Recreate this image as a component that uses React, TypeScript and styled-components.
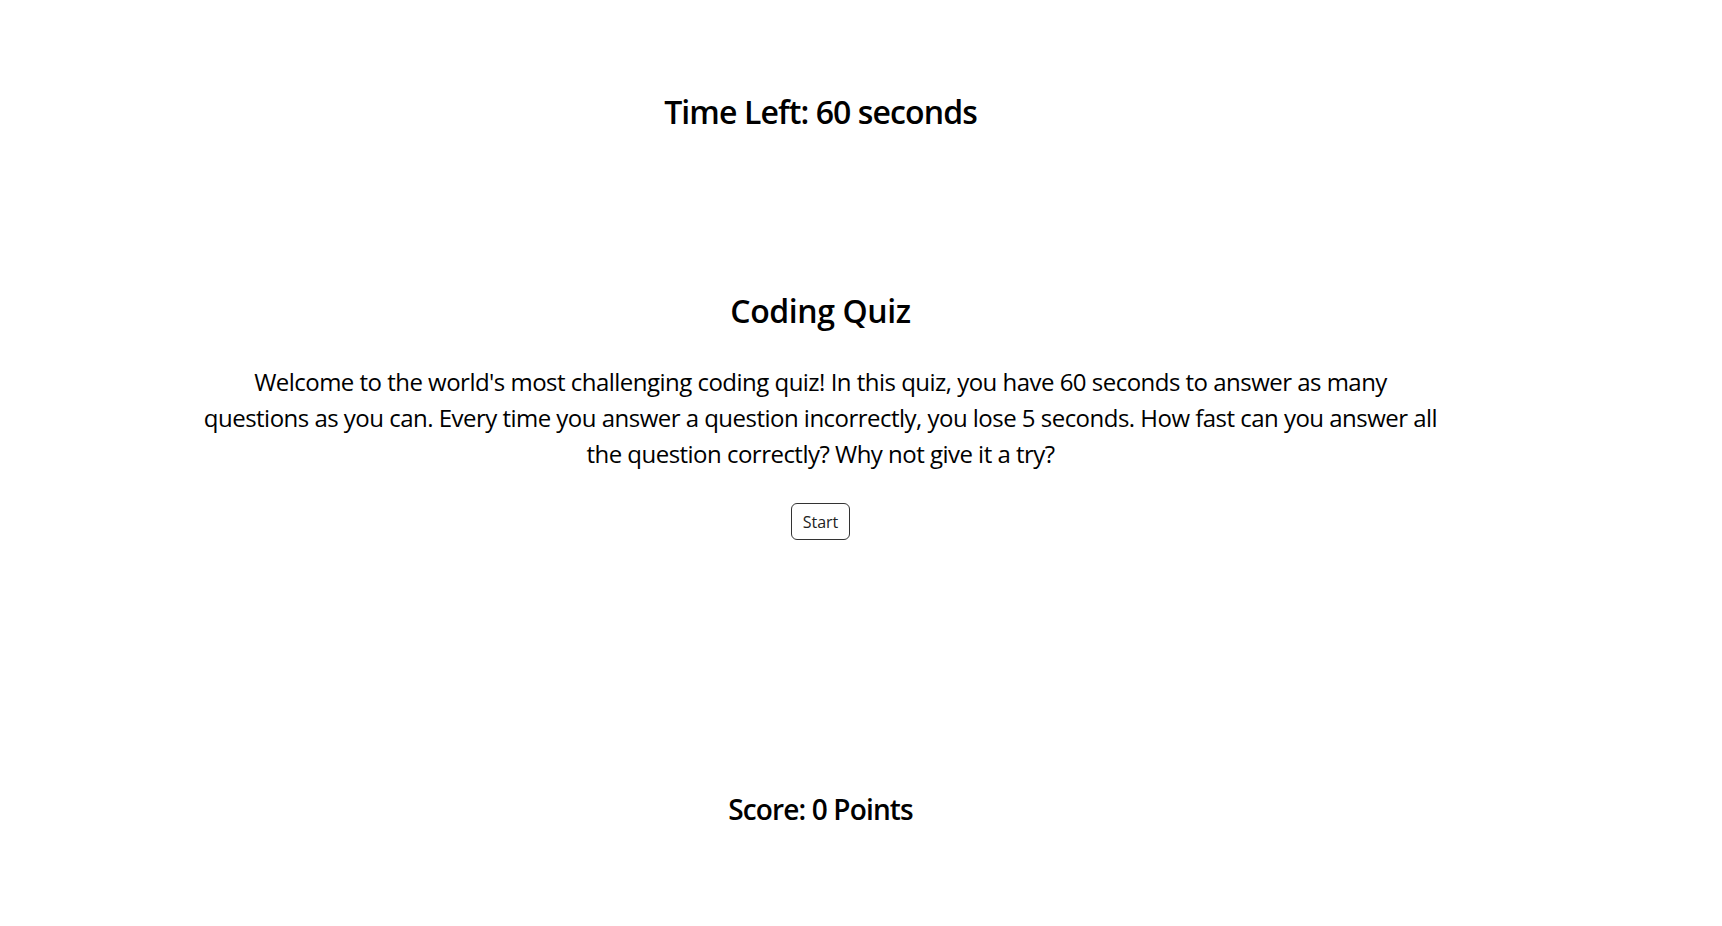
import styled, { createGlobalStyle } from "styled-components"

const GlobalStyle = createGlobalStyle`
  html, body {
    margin: 0;
    padding: 0;
    background: #ffffff;
  }
  body {
    font-family: "Open Sans", "Noto Sans", sans-serif;
    color: #000000;
  }
`

const Page = styled.div`
  width: 1641px;
  display: flex;
  flex-direction: column;
  align-items: center;
  text-align: center;
`

const Timer = styled.h1`
  margin: 92px 0 0;
  font-size: 32px;
  line-height: 40px;
  font-weight: 600;
  letter-spacing: -0.9px;
`

const QuizCard = styled.section`
  margin-top: 159px;
  display: flex;
  flex-direction: column;
  align-items: center;
`

const Title = styled.h2`
  margin: 0;
  font-size: 32px;
  line-height: 40px;
  font-weight: 600;
  letter-spacing: -0.4px;
`

const Intro = styled.p`
  margin: 33px 0 0;
  width: 1240px;
  font-size: 24px;
  line-height: 36px;
  letter-spacing: -0.52px;
`

const StartButton = styled.button`
  margin-top: 31px;
  height: 37px;
  padding: 0 11px;
  font-family: inherit;
  font-size: 16px;
  color: #222222;
  background: #ffffff;
  border: 1px solid #333333;
  border-radius: 6px;
  cursor: pointer;
`

const Score = styled.h3`
  margin: 251px 0 0;
  font-size: 28px;
  line-height: 36px;
  font-weight: 600;
  letter-spacing: -0.85px;
`

export default function App() {
  return (
    <>
      <GlobalStyle />
      <Page>
        <Timer>Time Left: 60 seconds</Timer>
        <QuizCard>
          <Title>Coding Quiz</Title>
          <Intro>
            Welcome to the world's most challenging coding quiz! In this quiz,
            you have 60 seconds to answer as many questions as you can. Every
            time you answer a question incorrectly, you lose 5 seconds. How fast
            can you answer all the question correctly? Why not give it a try?
          </Intro>
          <StartButton>Start</StartButton>
        </QuizCard>
        <Score>Score: 0 Points</Score>
      </Page>
    </>
  )
}
